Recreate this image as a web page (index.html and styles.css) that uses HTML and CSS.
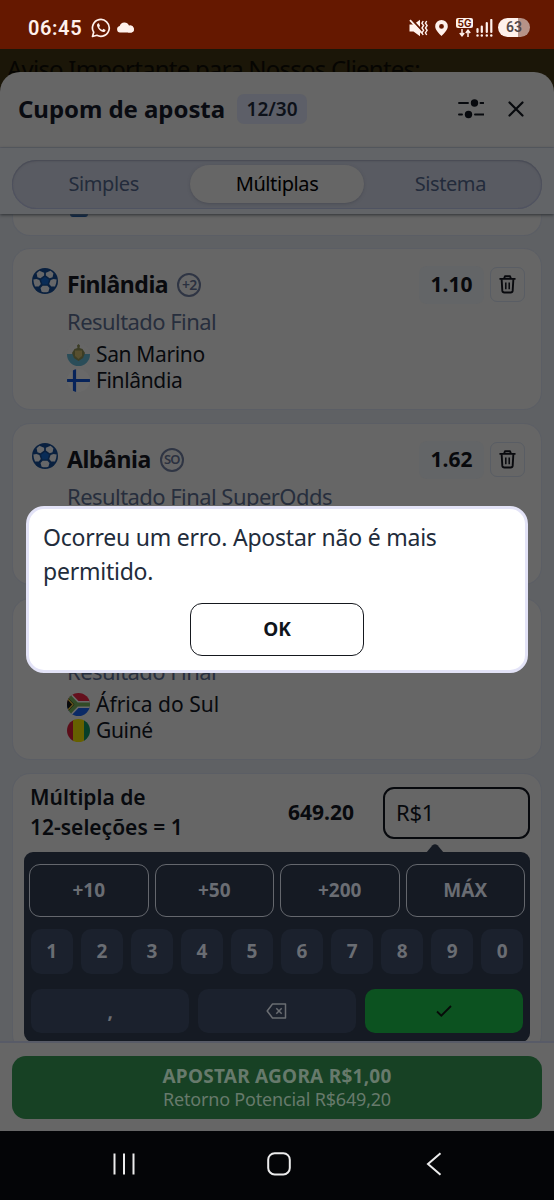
FILE: index.html
```html
<!DOCTYPE html>
<html lang="pt-BR">
<head>
<meta charset="utf-8">
<title>Cupom de aposta</title>
<link rel="stylesheet" href="styles.css">
</head>
<body>
<svg class="defs" aria-hidden="true">
  <symbol id="ball" viewBox="0 0 26 26">
    <circle cx="13" cy="13" r="13" fill="#09203f"/>
    <g fill="#666769">
      <path d="M7.4 2.8 12.1 4.7V7.4L8.4 10.2 5.4 9.2 4.6 5.2Z"/>
      <path d="M18.6 2.8 13.9 4.7V7.4L17.6 10.2 20.6 9.2 21.4 5.2Z"/>
      <path d="M1.4 11.4 4.5 11 7.4 12 8.8 16 6.8 18.6 3 18.4Q1.4 15 1.4 11.4Z"/>
      <path d="M24.6 11.4 21.5 11 18.6 12 17.2 16 19.2 18.6 23 18.4Q24.6 15 24.6 11.4Z"/>
      <path d="M8.5 20 10.6 17.7H15.4L17.5 20 16.4 23.7Q13 25 9.6 23.7Z"/>
    </g>
    <path d="m13 8.8 4 3-1.5 4.6h-5L9 11.8Z" fill="#092c57"/>
  </symbol>
  <symbol id="trash" viewBox="0 0 18 20">
    <g fill="none" stroke="#08090d" stroke-width="2" stroke-linejoin="round">
      <path d="M.5 4h17M5.500 3.500 6.300 1.300h5.400l.8 2.200"/>
      <path d="M2.800 4.500 3.500 16.500Q3.700 18.500 5.700 18.500h6.600Q14.300 18.500 14.500 16.500L15.200 4.500"/>
      <path d="M7.200 8v7M10.800 8v7" stroke-width="1.6"/>
    </g>
  </symbol>
</svg>

<div class="screen">
  <header class="status">
    <div class="status-left">
      <span class="clock">06:45</span>
      <svg class="wa" width="20" height="20" viewBox="0 0 20 20"><path d="M1.500 18.500 2.700 14.300A8.400 8.400 0 1 1 5.900 17.300Z" fill="none" stroke="#fff1ec" stroke-width="1.7" stroke-linejoin="round"/><path d="M7.300 5.300c-1 .3-1.600 1.500-1.100 3 .9 2.800 3.200 5 5.900 5.700 1.300.2 2.500-.7 2.500-2l-2.200-1.200-1 1.200c-1.600-.6-2.700-1.700-3.300-3.100l.9-1-1-2.500Z" fill="#fff1ec"/></svg>
      <svg class="cloud" width="19" height="11" viewBox="0 0 19 11"><path d="M4 10.500a3.300 3.300 0 0 1-.3-6.500A5 5 0 0 1 13 3.500a3.600 3.600 0 0 1 2.300 7Z" fill="#fff1ec"/><path d="M14 4.500a3 3 0 0 1 1.500 6H12Z" fill="#fff1ec"/></svg>
    </div>
    <div class="status-right">
      <svg width="19" height="18" viewBox="0 0 19 18"><path d="M.5 5.500h4L11 .8v16.400L4.500 12.500h-4Z" fill="#fff1ec"/><path d="M2 0 13 11.500" stroke="#651800" stroke-width="2"/><path d="m1 1.200 12 13" stroke="#fff1ec" stroke-width="1.8"/><path d="m14.200 2-1.300 2.300 1.700 2.200L13 9l1.600 2.300-1.700 2.500 1.300 2.200M17.700 2l-1.300 2.300 1.700 2.200L16.500 9l1.600 2.300-1.700 2.500 1.300 2.200" fill="none" stroke="#fff1ec" stroke-width="1.4"/></svg>
      <svg class="pin" width="13" height="16" viewBox="0 0 13 16"><path d="M6.500 0A6.300 6.300 0 0 1 12.800 6.300C12.800 10 9 13.500 6.500 16 4 13.500.2 10 .2 6.300A6.300 6.300 0 0 1 6.500 0Zm0 4a2.400 2.400 0 1 0 0 4.800 2.400 2.400 0 0 0 0-4.800Z" fill="#fff1ec"/></svg>
      <div class="net"><span class="net-label">5G</span><svg width="12" height="8" viewBox="0 0 12 8"><path d="M3 0v6.500M.8 4 3 6.700 5.200 4M9 8V1.500M6.800 4 9 1.300 11.200 4" fill="none" stroke="#fff1ec" stroke-width="1.5"/></svg></div>
      <svg class="signal" width="17" height="18" viewBox="0 0 17 18"><path d="M1.500 10v3M5.800 7.500V13M10.800 4v9M15.300 1v12" stroke="#fff1ec" stroke-width="2.2" stroke-linecap="round"/><path d="M1.500 16.500h0M5.800 16.500h0M10.800 16.500h0M15.300 16.500h0" stroke="#fff1ec" stroke-width="2.5" stroke-linecap="round"/></svg>
      <span class="battery">63</span>
    </div>
  </header>

  <div class="notice">Aviso Importante para Nossos Clientes:</div>

  <main class="sheet">
    <div class="sheet-head">
      <h1>Cupom de aposta</h1>
      <span class="count">12/30</span>
      <svg class="filters" width="26" height="20" viewBox="0 0 26 20"><path d="M1 4h9M22.500 4H25.500M1 15.500h3M17 15.500h9" stroke="#07090d" stroke-width="1.9" stroke-linecap="round"/><circle cx="16.500" cy="4" r="3.700" fill="#07090d"/><circle cx="10.500" cy="15.500" r="3.700" fill="#07090d"/></svg>
      <svg class="close" width="16" height="16" viewBox="0 0 16 16"><path d="m1.500 1.500 13 13m0-13-13 13" stroke="#07090d" stroke-width="2.2" stroke-linecap="round"/></svg>
    </div>

    <nav class="tabs">
      <div class="pill">
        <span class="tab">Simples</span>
        <span class="tab active">Múltiplas</span>
        <span class="tab">Sistema</span>
      </div>
    </nav>

    <div class="list">
      <article class="card partial"><i class="flag-edge"></i></article>

      <article class="card">
        <svg class="ball"><use href="#ball"/></svg>
        <div class="bet">
          <div class="bet-head">
            <h2>Finlândia</h2><span class="tag plus">+2</span>
            <span class="odd">1.10</span>
            <span class="remove"><svg><use href="#trash"/></svg></span>
          </div>
          <div class="market">Resultado Final</div>
          <div class="team"><svg class="flag" viewBox="0 0 23 23"><clipPath id="c"><circle cx="11.500" cy="11.500" r="11.500"/></clipPath><g clip-path="url(#c)"><path fill="#676767" d="M0 0h23v11H0Z"/><path fill="#2a4d59" d="M0 11h23v12H0Z"/><path fill="#3c3d25" d="M5 10 7.500 6l3-1-.5-2.500L11.500 1 13 2.500 12.500 5l3 1L18 10l-2 5-4.500 3L7 15Z"/><path fill="#574f2f" d="M8 7.500h7V13l-3.500 3L8 13Z"/></g></svg><span>San Marino</span></div>
          <div class="team two"><svg class="flag" viewBox="0 0 23 23"><g clip-path="url(#c)"><path fill="#696969" d="M0 0h23v23H0Z"/><path stroke="#06235a" stroke-width="3.2" d="M7.500 0v23M0 11.500h23"/></g></svg><span>Finlândia</span></div>
        </div>
      </article>

      <article class="card">
        <svg class="ball"><use href="#ball"/></svg>
        <div class="bet">
          <div class="bet-head">
            <h2 class="alb">Albânia</h2><span class="tag so">SO</span>
            <span class="odd">1.62</span>
            <span class="remove"><svg><use href="#trash"/></svg></span>
          </div>
          <div class="market">Resultado Final SuperOdds</div>
        </div>
      </article>

      <article class="card">
        <div class="bet">
          <div class="bet-head"></div>
          <div class="market">Resultado Final</div>
          <div class="team"><svg class="flag" viewBox="0 0 23 23"><g clip-path="url(#c)"><path fill="#65101d" d="M0 0h23v11H0Z"/><path fill="#0b2a66" d="M0 12h23v11H0Z"/><path d="M-1 0 10 11.500-1 23M10 11.500h14" fill="none" stroke="#696969" stroke-width="7"/><path d="M0 3v17l8-8.500Z" fill="#07090a"/><path d="M-1 0 10 11.500-1 23M10 11.500h14" fill="none" stroke="#324b27" stroke-width="3.8"/><path d="m0 5 6 6.500L0 18" fill="none" stroke="#65541c" stroke-width="1.3"/></g></svg><span class="africa">África do Sul</span></div>
          <div class="team two"><svg class="flag" viewBox="0 0 23 23"><g clip-path="url(#c)"><path fill="#5b0c18" d="M0 0h7v23H0Z"/><path fill="#666000" d="M6 0h11.500v23H6Z"/><path fill="#073f29" d="M17 0h6v23h-6Z"/></g></svg><span>Guiné</span></div>
        </div>
      </article>

      <section class="card stake">
        <div class="stake-head">
          <div class="stake-name"><div>Múltipla de</div><div>12-seleções = 1</div></div>
          <span class="total">649.20</span>
          <span class="amount">R$1</span>
        </div>
        <div class="pad">
          <svg class="caret" width="18" height="9" viewBox="0 0 18 9"><path d="M0 9 6.500 1.300Q9-1 11.500 1.300L18 9Z" fill="#151a23"/></svg>
          <div class="quick"><span>+10</span><span>+50</span><span>+200</span><span>MÁX</span></div>
          <div class="digits"><span>1</span><span>2</span><span>3</span><span>4</span><span>5</span><span>6</span><span>7</span><span>8</span><span>9</span><span>0</span></div>
          <div class="actions">
            <span>,</span>
            <span><svg width="21" height="16" viewBox="0 0 21 16"><path d="M6.500 1H19.500V15H6.500L1.200 8Z" fill="none" stroke="#6a6d72" stroke-width="1.5" stroke-linejoin="round"/><path d="m10.300 5.300 5.400 5.400m0-5.400-5.400 5.400" stroke="#6a6d72" stroke-width="1.5"/></svg></span>
            <span class="ok"><svg width="16" height="12" viewBox="0 0 16 12"><path d="m1 6.500 4.300 4.200L15 1" fill="none" stroke="#070b09" stroke-width="1.8"/></svg></span>
          </div>
        </div>
      </section>
    </div>

    <footer class="footer">
      <div class="place"><strong>APOSTAR AGORA R$1,00</strong><span>Retorno Potencial R$649,20</span></div>
    </footer>
  </main>

  <nav class="system">
    <svg width="22" height="24" viewBox="0 0 22 24"><path d="M1.500 1.500v21M11 1.500v21M20.500 1.500v21" stroke="#ececec" stroke-width="2"/></svg>
    <svg width="24" height="24" viewBox="0 0 24 24"><rect x="1.200" y="1.200" width="21.600" height="21.200" rx="6.500" fill="none" stroke="#ececec" stroke-width="2"/></svg>
    <svg width="16" height="24" viewBox="0 0 16 24"><path d="M14.500 1.300 2 12l12.500 10.700" fill="none" stroke="#ececec" stroke-width="2"/></svg>
  </nav>

  <div class="dialog">
    <p>Ocorreu um erro. Apostar não é mais<br>permitido.</p>
    <button>OK</button>
  </div>
</div>
</body>
</html>
```
FILE: styles.css
```css
* { box-sizing: border-box; }
body { margin: 0; background: #1b1608; font-family: "Noto Sans", sans-serif; }
h1, h2, p { margin: 0; }
svg { display: block; flex: none; }
span { white-space: nowrap; }
.defs { position: absolute; width: 0; height: 0; }
.screen { position: relative; width: 554px; height: 1200px; overflow: hidden; display: flex; flex-direction: column; }

.status { height: 49px; flex: none; background: #651800; color: #fff1ec; display: flex; justify-content: space-between; padding: 6px 24px 0 28px; align-items: center; }
.status-left, .status-right { display: flex; align-items: center; }
.clock { font: 600 20px/24px Roboto, sans-serif; letter-spacing: .6px; width: 54px; }
.wa { margin-left: 9px; }
.cloud { margin-left: 5px; }
.pin { margin-left: 7px; }
.net { margin-left: 8px; display: flex; flex-direction: column; align-items: center; gap: 1px; }
.net-label { background: #fff1ec; color: #651800; font: 700 10px/10px Inter, sans-serif; width: 17px; text-align: center; border-radius: 2px; }
.signal { margin-left: 3px; }
.battery { margin-left: 5px; width: 32px; height: 19px; border-radius: 10px; background: linear-gradient(90deg, #fff1ec 63%, #b79388 63%); color: #55494a; font: 600 14px/19px Roboto, sans-serif; text-align: center; }

.notice { height: 23px; flex: none; padding-left: 7px; font-size: 24px; line-height: 40px; letter-spacing: -.78px; color: #060502; white-space: nowrap; background: #1b1608; }
.sheet { position: relative; height: 1059px; flex: none; background: #666; border-radius: 20px 20px 0 0; overflow: hidden; display: flex; flex-direction: column; }
.sheet-head { height: 76px; flex: none; display: flex; align-items: center; padding: 0 30px 2px 18px; border-bottom: 1px solid #5b5e66; }
h1 { font-size: 24px; line-height: 32px; letter-spacing: -.06px; color: #090b11; }
.count { margin-left: 12px; width: 70px; height: 30px; border-radius: 7px; background: #5d5f68; color: #0d1119; text-align: center; font-weight: 600; font-size: 19px; line-height: 30px; }
.filters { margin-left: auto; margin-right: 24px; }

.tabs { position: relative; z-index: 1; height: 66px; flex: none; padding: 12px 12px 0; background: #626467; box-shadow: 0 1px 3px #2e3034; }
.pill { height: 49px; border-radius: 25px; padding: 5px 5px; background: #595b62; box-shadow: inset 0 1px 2px #484a51, inset 0 0 0 1px #515463; display: grid; grid-template-columns: repeat(3, 1fr); font-size: 20px; line-height: 37px; text-align: center; color: #232b3b; }
.tab { letter-spacing: -.4px; height: 38px; border-radius: 19px; }
.tab.active { background: #666; color: #000; box-shadow: 0 1px 3px #4b4d55; }

.list { flex: 1; min-height: 0; overflow: hidden; background: #5f6164; padding: 0 12px; display: flex; flex-direction: column; gap: 13px; }
.card { height: 162px; flex: none; background: #666; border: 1px solid #5b5e65; border-radius: 18px; display: flex; padding: 18px 16px 0 19px; position: relative; }
.partial { height: 22px; border-top: 0; border-radius: 0 0 18px 18px; margin-bottom: -1px; padding: 0; }
.flag-edge { width: 18px; height: 3px; margin-left: 57px; background: #0a2546; border-radius: 0 0 9px 9px; }
.ball { width: 26px; height: 26px; margin: 1px 9px 0 0; }
.bet { flex: 1; }
.card > .bet:first-child { margin-left: 35px; }
.bet-head { display: flex; align-items: center; height: 36px; }
h2 { font-size: 23px; line-height: 34px; letter-spacing: -.45px; color: #090a0e; padding-bottom: 2px; }
.alb { letter-spacing: -.4px; }
.tag { margin: -1px 0 0 9px; width: 24px; height: 24px; border: 2px solid #2f3544; border-radius: 50%; color: #2b3140; font-weight: 600; text-align: center; font-size: 14px; line-height: 19px; letter-spacing: -.8px; }
.so { font-size: 13px; }
.odd { margin-left: auto; width: 65px; height: 38px; border-radius: 8px; background: #636567; text-align: center; font-weight: 700; font-size: 21px; line-height: 37px; color: #08090c; }
.remove { margin-left: 6px; width: 35px; height: 35px; border: 1.5px solid #595d64; border-radius: 7px; display: grid; place-items: center; margin-top: -1px; }
.remove svg { width: 17px; height: 19px; }
.market { margin-top: 5px; font-size: 22px; line-height: 26px; letter-spacing: -.55px; color: #272e3d; white-space: nowrap; }
.team { margin-top: 7px; height: 26px; display: flex; align-items: center; font-size: 21px; line-height: 26px; letter-spacing: -.35px; color: #080a0e; }
.team.two { margin-top: 0; }
.africa { letter-spacing: 0; }
.flag { width: 23px; height: 23px; margin: 1px 6px 0 0; }

.stake { height: 280px; padding: 0 11px; flex-direction: column; }
.stake-head { height: 78px; display: flex; align-items: flex-start; padding: 8px 0 0 6px; color: #080a0e; }
.stake-name { font-weight: 600; font-size: 21px; line-height: 30px; white-space: nowrap; width: 258px; }
.total { font-weight: 700; font-size: 21px; line-height: 61px; }
.amount { margin: 5px 0 0 auto; width: 147px; height: 52px; border: 2px solid #07090d; border-radius: 11px; padding-left: 11px; font-size: 22px; line-height: 46px; letter-spacing: -.3px; }
.pad { position: relative; height: 190px; background: #151a23; border-radius: 9px; padding: 12px 5px 0; color: #6a6d73; font-weight: 700; font-size: 19px; text-align: center; }
.caret { position: absolute; left: 402px; top: -8px; }
.quick { display: grid; grid-template-columns: repeat(4, 1fr); gap: 6px; }
.quick span { height: 53px; border: 1.5px solid #64676d; border-radius: 11px; line-height: 51px; }
.digits { display: grid; grid-template-columns: repeat(10, 1fr); gap: 8.5px; padding: 0 2px; margin-top: 12px; }
.digits span { height: 45px; border-radius: 10px; background: #1b212d; line-height: 45px; }
.actions { display: grid; grid-template-columns: repeat(3, 1fr); gap: 8.5px; padding: 0 2px; margin-top: 15px; }
.actions span { height: 44px; border-radius: 10px; background: #1b212d; line-height: 42px; display: grid; place-items: center; }
.actions .ok { background: #0c5220; }

.footer { height: 90px; flex: none; border-top: 2px solid #585b67; padding: 13px 12px 0; background: #666; }
.place { height: 63px; border-radius: 14px; background: #174124; color: #677a6c; display: flex; flex-direction: column; align-items: center; padding-top: 9px; }
.place strong { font-size: 19px; line-height: 23px; letter-spacing: .25px; }
.place span { font-size: 18px; line-height: 22px; letter-spacing: -.19px; }

.system { height: 69px; flex: none; background: #040507; display: grid; grid-template-columns: 22px 24px 16px; column-gap: 132px; justify-content: start; align-items: center; padding: 0 0 3px 113px; }
.system svg:last-child { margin-left: 3px; }

.dialog { position: absolute; left: 26px; top: 506px; width: 502px; height: 167px; background: #fff; border: 3px solid #e3e3f7; border-radius: 18px; padding: 11px 14px; text-align: center; }
.dialog p { text-align: left; font-size: 23px; line-height: 34px; letter-spacing: -.23px; color: #222c3b; white-space: nowrap; }
.dialog button { margin-top: 15px; width: 174px; height: 53px; border: 1.5px solid #15181e; border-radius: 12px; background: #fff; color: #10141b; font: 700 19px/26px "Noto Sans", sans-serif; padding: 0 0 2px; }
```
